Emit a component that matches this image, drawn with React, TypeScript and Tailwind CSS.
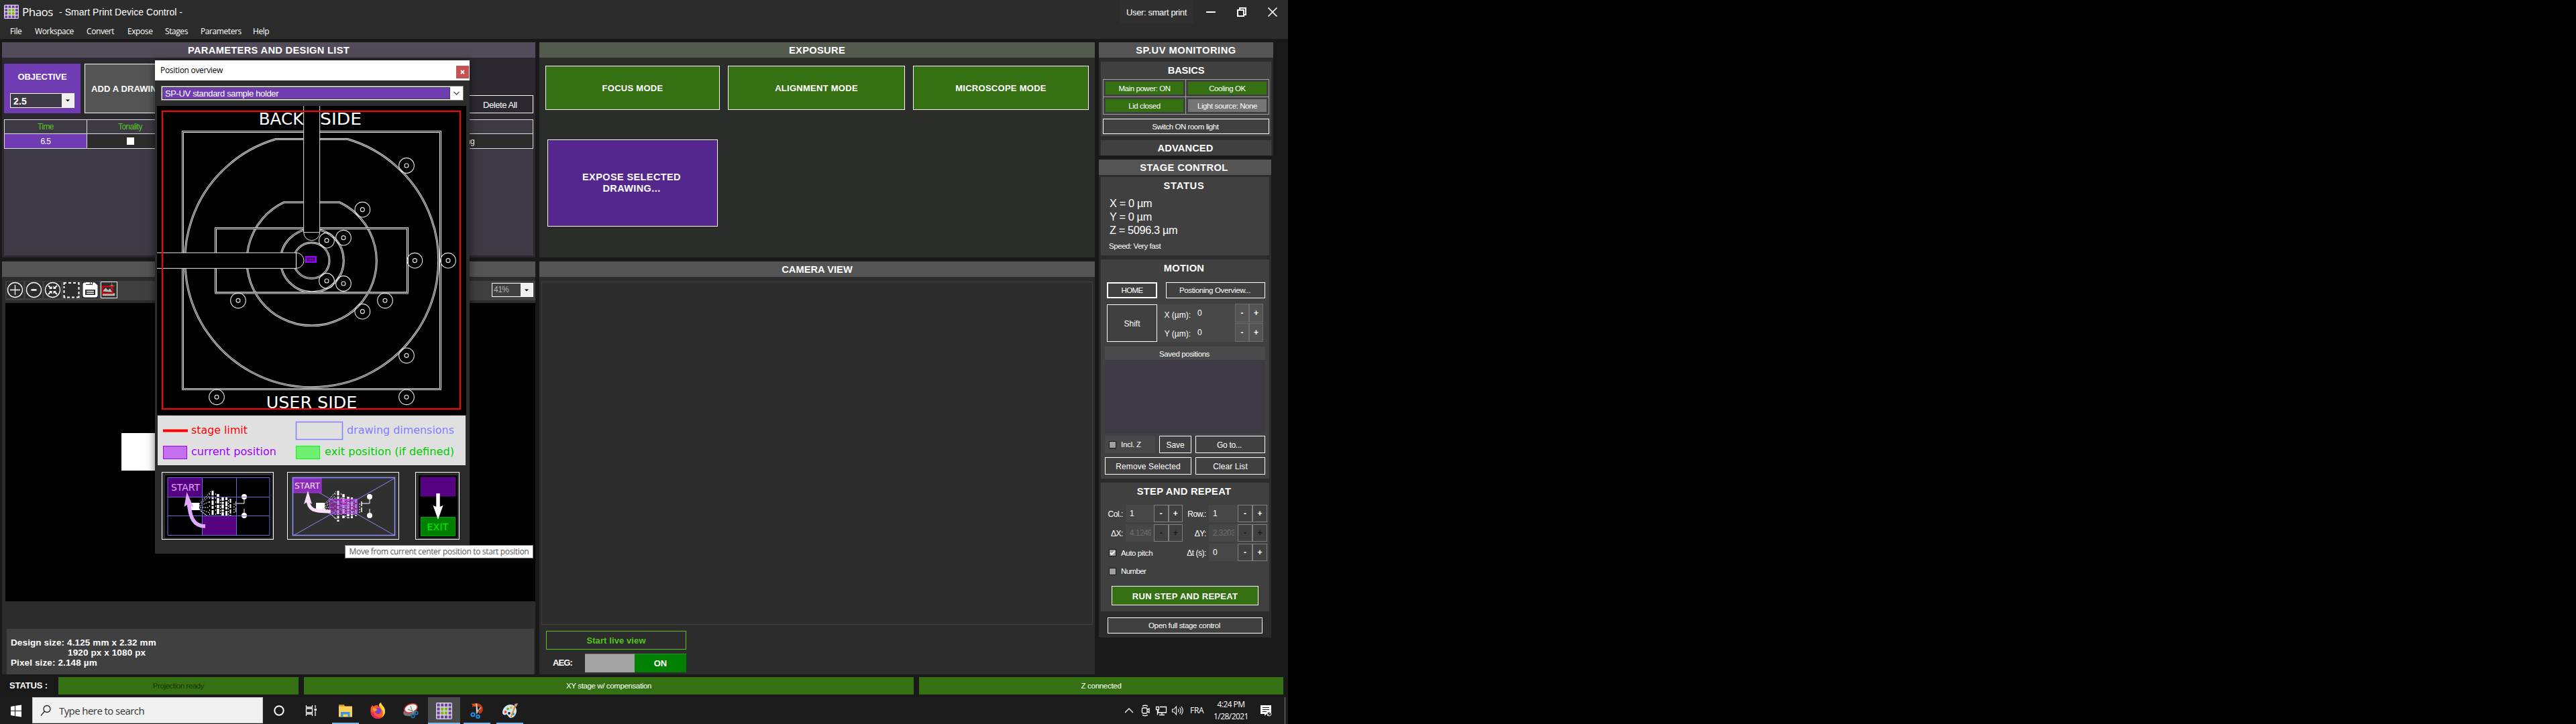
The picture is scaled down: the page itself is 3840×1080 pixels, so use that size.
import React from "react";

const heading = "font-bold text-[14.7px] leading-[16px] whitespace-nowrap text-white";
const small = "text-[11.5px] leading-[14px] whitespace-nowrap text-white";
const label = "text-[12px] leading-[14px] whitespace-nowrap text-white";
const center = "flex items-center justify-center shrink-0";

function PhaosLogo({ w, h }: { w: number; h: number }) {
  const cells = [];
  for (let r = 0; r < 4; r++)
    for (let c = 0; c < 4; c++) {
      const mid = r > 0 && r < 3 && c > 0 && c < 3;
      cells.push(<rect key={r * 4 + c} x={1.3 + c * 5} y={1.3 + r * 5} width="3.6" height="3.6" fill={mid ? "#7cb518" : "#6b3fa0"} />);
    }
  return (
    <svg width={w} height={h} viewBox="0 0 21 21" preserveAspectRatio="none">
      <rect width="21" height="21" rx="1.5" fill="#d9d4de" />
      {cells}
    </svg>
  );
}

function TitleBar() {
  return (
    <header className="flex h-[35px] shrink-0 items-start bg-[#2c2c2c]">
      <div className="flex h-[35px] flex-1 items-center pl-[6px]">
        <PhaosLogo w={22} h={21} />
        <span className="ml-[5px] w-[55px] font-['Open_Sans'] text-[17px] tracking-[-0.5px] text-white">Phaos</span>
        <span className="text-[14px] tracking-[0.04px] text-white pt-px">- Smart Print Device Control -</span>
      </div>
      <div className="flex h-[35px] w-[109px] items-center bg-[#303030] pl-[9px] pt-[3px] text-[13px] tracking-[-0.36px] text-white">User: smart print</div>
      <svg className="w-[141px] h-[35px]" viewBox="1779 0 141 35" fill="none" stroke="#fff" strokeWidth="2">
        <path d="M1798 18h14" />
        <path d="M1845 15h9v9h-9zM1848 14v-2h9v10h-3" />
        <path d="M1890.5 11.500l13 13M1903.500 11.500l-13 13" strokeWidth="1.7" />
      </svg>
    </header>
  );
}

function MenuBar() {
  const items: [string, string][] = [
    ["File", "w-[37px]"], ["Workspace", "w-[77px]"], ["Convert", "w-[61px]"], ["Expose", "w-[56px]"],
    ["Stages", "w-[53px]"], ["Parameters", "w-[78px]"], ["Help", "w-[40px]"],
  ];
  return (
    <nav className="flex h-[23px] shrink-0 items-center bg-[#2c2c2c] pl-[15px] font-['Open_Sans'] text-[12px] tracking-[-0.42px] text-white">
      {items.map(([t, w]) => <span key={t} className={w}>{t}</span>)}
    </nav>
  );
}

function Caret() {
  return (
    <span className="flex h-full w-[18px] items-center justify-center bg-[#f0f0f0]">
      <svg width="6" height="4" viewBox="0 0 6 4"><path d="M0 .5h6L3 3.500z" fill="#000" /></svg>
    </span>
  );
}

function ParametersPanel() {
  return (
    <section className="h-[321px] shrink-0 bg-[#2b282f]">
      <h2 className={`${center} ${heading} h-[23px] bg-[#524c5a] tracking-[0.3px]`}>PARAMETERS AND DESIGN LIST</h2>
      <div className="flex h-[83px] items-end px-[3px]">
        <div className="flex h-[74px] w-[114px] flex-col bg-[#703cb3] px-[9px] pt-[12px]">
          <span className="text-center text-[13px] font-bold leading-[16px] tracking-[-0.08px] text-white">OBJECTIVE</span>
          <div className="mt-[16px] flex h-[22px] border border-white bg-[#3e3a45]">
            <span className="flex-1 pl-[4px] pt-px text-[14px] font-bold leading-[20px] tracking-[0.2px] text-white">2.5</span>
            <Caret />
          </div>
        </div>
        <div className="ml-[6px] flex h-[74px] w-[140px] items-center border border-white bg-[#545454] pl-[9px] pt-px text-[13px] font-bold tracking-[0.1px] text-white">ADD A DRAWING</div>
        <div className="flex-1" />
        <div className="flex h-[27px] w-[104px] items-center border border-white pl-[28px] pt-[2px] text-[13px] tracking-[-0.41px] text-white">Delete All</div>
      </div>
      <div className="mx-[3px] mt-[9px] h-[203px] bg-[#3e3a45] text-[12px] tracking-[-0.6px]">
        <div className="flex h-[22px] border border-[#dcdcdc] text-[#56c41c]">
          <div className="flex w-[123px] items-center justify-center border-r border-[#dcdcdc]">Time</div>
          <div className="flex w-[128px] items-center justify-center">Tonality</div>
        </div>
        <div className="flex h-[22px] border border-t-0 border-[#dcdcdc] bg-[#2c2c2c] text-white">
          <div className="flex w-[123px] items-center justify-center border-r border-[#dcdcdc] bg-[#703cb3]">6.5</div>
          <div className="flex w-[128px] items-center justify-center"><span className="size-[11px] bg-white" /></div>
          <div className="flex w-[449px] items-center justify-end">Drawing</div>
        </div>
      </div>
    </section>
  );
}

function Tool({ children, active }: { children: React.ReactNode; active?: boolean }) {
  return (
    <span className={active ? "size-[25px] border border-white bg-[#2c2c2c]" : "size-[25px] bg-[#2c2c2c]"}>
      <svg viewBox="0 0 25 25" className="size-full" fill="none" stroke="#fff" strokeWidth="1.3">{children}</svg>
    </span>
  );
}

function PreviewPanel() {
  return (
    <section className="flex h-[616px] shrink-0 flex-col bg-[#2c2c2c]">
      <div className="h-[23px] bg-[#545454]" />
      <div className="ml-[5px] mt-[6px] flex h-[29px] items-start gap-[3px] bg-[#404040] pl-[2px] pt-px">
        <Tool><circle cx="12.500" cy="12.500" r="11" /><path d="M12.500 5v15M5 12.500h15" /></Tool>
        <Tool><circle cx="12.500" cy="12.500" r="11" /><path d="M8.500 12.500h8" strokeWidth="2.500" /></Tool>
        <Tool>
          <circle cx="12.500" cy="12.500" r="11" />
          <path d="M6 6l4.500 4.500M19 6l-4.500 4.500M6 19l4.500-4.500M19 19l-4.500-4.500" strokeWidth="2" />
          <path d="M7 11h4.500V6.500zM18 11h-4.500V6.500zM7 14h4.500v4.500zM18 14h-4.500v4.500z" fill="#fff" stroke="none" />
        </Tool>
        <Tool><path d="M1.500 5V2H5M8 2h4M15 2h4M22 2h1.500v3M23.500 8v4M23.500 15v4M23.500 21v2.500H20M17 23.500h-4M10 23.500H6M3.500 23.500h-2V20M1.500 17v-4M1.500 10V7" strokeWidth="2" /></Tool>
        <Tool>
          <path d="M1.500 4.500q0-3 3-3H19l4.500 4v15q0 3-3 3h-16q-3 0-3-3z" fill="#fff" stroke="none" />
          <path d="M6 1h10v4H6zM5 12h15v8H5z" fill="#2c2c2c" stroke="none" />
          <path d="M6 1h6v3H6zM13 1h2v3h-2z" fill="#fff" stroke="none" />
          <path d="M7 14.500h11M7 17.500h11" />
        </Tool>
        <Tool active>
          <path d="M2 18h20v4H2zM2 15l5-6 4 4 3-3 4 6z" fill="#bbb" stroke="none" />
          <circle cx="17" cy="6" r="2.200" fill="#999" stroke="none" />
          <path d="M17 1v10M12 6h10" stroke="#777" strokeWidth="1" />
          <rect x="2.200" y="7" width="16" height="11" stroke="#e00" strokeWidth="2" />
        </Tool>
        <span className="flex-1" />
        <div className="mr-[3px] mt-[2px] flex h-[21px] w-[62px] border border-white bg-[#404040]">
          <span className="flex-1 pl-[2px] text-[12px] leading-[18px] tracking-[-0.5px] text-[#b4b4b4]">41%</span>
          <Caret />
        </div>
      </div>
      <div className="ml-[5px] mt-[4px] flex h-[445px] shrink-0 items-start bg-black pl-[173px] pt-[194px]">
        <div className="h-[56px] w-[88px] bg-white" />
      </div>
      <div className="ml-[7px] mr-[2px] mt-auto h-[68px] bg-[#404040] pl-[6px] pt-[13px] text-[13.5px] font-bold leading-[15px] tracking-[0.12px] text-white">
        <p>Design size: 4.125 mm x 2.32 mm</p>
        <p className="pl-[85px]">1920 px x 1080 px</p>
        <p>Pixel size: 2.148 µm</p>
      </div>
    </section>
  );
}

function ExposurePanel() {
  const mode = `${center} h-[66px] border border-white bg-[#357013] pt-[2px] text-[13px] font-bold tracking-[0.27px] text-white`;
  return (
    <section className="h-[321px] shrink-0 bg-[#2a2d29]">
      <h2 className={`${center} ${heading} h-[23px] bg-[#525a4e] tracking-[0.3px]`}>EXPOSURE</h2>
      <div className="flex gap-[12px] pl-[9px] pt-[12px]">
        <div className={`${mode} w-[260px]`}>FOCUS MODE</div>
        <div className={`${mode} w-[264px]`}>ALIGNMENT MODE</div>
        <div className={`${mode} w-[262px]`}>MICROSCOPE MODE</div>
      </div>
      <div className={`${center} ml-[12px] mt-[44px] h-[130px] w-[254px] border border-white bg-[#54278f] pr-[3px] text-center text-[14.5px] font-bold leading-[17px] tracking-[0.4px] text-white`}>
        EXPOSE SELECTED<br />DRAWING...
      </div>
    </section>
  );
}

function CameraPanel() {
  return (
    <section className="flex h-[616px] shrink-0 flex-col bg-[#2c2c2c]">
      <h2 className={`${center} ${heading} h-[23px] bg-[#545454] tracking-[0px]`}>CAMERA VIEW</h2>
      <div className="mx-[3px] mt-[7px] h-[512px] shrink-0 border border-[#3e3e3e]" />
      <div className={`${center} ml-[10px] mt-[9px] h-[28px] w-[209px] border border-[#56c41c] pt-[2px] text-[13px] font-bold tracking-[0.1px] text-[#56c41c]`}>Start live view</div>
      <div className="ml-[20px] mt-[6px] flex h-[28px] items-center text-[13px] font-bold text-white">
        <span className="w-[48px] tracking-[-0.9px]">AEG:</span>
        <span className="h-[28px] w-[74px] border-t border-[#777] bg-[#a3a3a3]" />
        <span className={`${center} h-[28px] w-[77px] border-t border-[#2f8f2f] bg-[#008000]`}>ON</span>
      </div>
    </section>
  );
}

function Led({ text, off }: { text: string; off?: boolean }) {
  return (
    <div className="flex p-[3px]">
      <div className={`${center} ${small} flex-1 pt-px tracking-[-0.42px] ${off ? "bg-[#757575]" : "bg-[#357013]"}`}>{text}</div>
    </div>
  );
}

function Monitoring() {
  return (
    <section className="h-[169px] w-[260px] shrink-0 bg-[#2c2c2c]">
      <h2 className={`${center} ${heading} h-[23px] bg-[#545454] tracking-[0.5px]`}>SP.UV MONITORING</h2>
      <div className="mx-[3px] mt-[6px] h-[111px] bg-[#404040] px-[3px]">
        <h3 className={`${center} ${heading} h-[26px] tracking-[-0.15px]`}>BASICS</h3>
        <div className="grid h-[53px] grid-cols-[122px_123px] grid-rows-2 gap-px border border-[#a0a0a0] bg-[#a0a0a0] *:bg-[#404040]">
          <Led text="Main power: ON" />
          <Led text="Cooling OK" />
          <Led text="Lid closed" />
          <Led text="Light source: None" off />
        </div>
        <div className={`${center} ${small} mt-[6px] h-[23px] border border-white pr-[2px] tracking-[-0.45px]`}>Switch ON room light</div>
      </div>
      <h3 className={`${center} ${heading} mx-[3px] mt-[6px] h-[23px] bg-[#404040] pr-[2px] tracking-[0.1px]`}>ADVANCED</h3>
    </section>
  );
}

const Pm = ({ cls, dim }: { cls: string; dim?: boolean }) => (
  <div className={`${cls} flex shrink-0 border text-[12px] font-bold ${dim ? "text-[#161616]" : "text-white"}`}>
    <span className="flex flex-1 items-center justify-center border-r-2 border-inherit">-</span>
    <span className="flex flex-1 items-center justify-center">+</span>
  </div>
);

function Check({ on }: { on?: boolean }) {
  return (
    <span className="flex size-[11px] shrink-0 items-center justify-center border border-[#161616] bg-[#a0a0a0]">
      {on && <svg viewBox="0 0 9 9" className="size-[9px]" fill="none" stroke="#fff" strokeWidth="1.7"><path d="M1 4.500l2.300 2.500L8 2" /></svg>}
    </span>
  );
}

function Motion() {
  return (
    <div className="mx-[3px] mt-[6px] h-[327px] bg-[#404040]">
      <h3 className={`${center} ${heading} h-[25px] pr-[3px] tracking-[0.3px]`}>MOTION</h3>
      <div className="mt-[9px] flex pl-[9px]">
        <div className={`${center} ${small} h-[24px] w-[75px] border-2 border-white tracking-[-0.6px]`}>HOME</div>
        <div className={`${center} ${small} ml-[13px] h-[24px] w-[148px] border border-white pr-[2px] tracking-[-0.35px]`}>Postioning Overview...</div>
      </div>
      <div className="ml-[9px] mt-[8px] flex h-[57px] items-end">
        <div className={`${center} ${label} h-[56px] w-[75px] border border-white pt-[2px]`}>Shift</div>
        <div className="flex h-[56px] w-[54px] flex-col items-end bg-[#484848] pr-[4px] pt-[9px] text-[12px] leading-[14px] text-white">
          <span>X (µm):</span>
          <span className="mt-[14px]">Y (µm):</span>
        </div>
        <div className="flex h-[57px] w-[62px] flex-col bg-[#484848] pl-[6px] text-[12px] leading-[28px] text-white">
          <span className="h-[29px]">0</span><span>0</span>
        </div>
        <div className="flex h-[57px] flex-col justify-between bg-[#484848]">
          <Pm cls="h-[28px] w-[42px] border-[#6c6c6c] bg-[#545454]" />
          <Pm cls="h-[28px] w-[42px] border-[#6c6c6c] bg-[#545454]" />
        </div>
      </div>
      <div className={`${center} ${small} mx-[6px] mt-[7px] h-[20px] bg-[#4a4a4a] pr-[2px] pt-[2px] tracking-[-0.42px]`}>Saved positions</div>
      <div className="mx-[6px] h-[110px] bg-[#3e3a45]" />
      <div className="ml-[6px] mt-[3px] flex">
        <div className={`${small} flex h-[26px] w-[75px] items-center gap-[7px] bg-[#484848] pl-[6px] tracking-[-0.2px]`}><Check />Incl. Z</div>
        <div className={`${center} ${label} ml-[6px] h-[26px] w-[48px] border border-white pt-[2px] tracking-[-0.1px]`}>Save</div>
        <div className={`${center} ${label} ml-[6px] h-[26px] w-[104px] border border-white pr-[3px] pt-[2px] tracking-[-0.3px]`}>Go to...</div>
      </div>
      <div className="ml-[6px] mt-[6px] flex">
        <div className={`${center} ${label} h-[26px] w-[129px] border border-white pt-[2px] tracking-[0.12px]`}>Remove Selected</div>
        <div className={`${center} ${label} ml-[6px] h-[26px] w-[104px] border border-white pt-[2px] tracking-[0.1px]`}>Clear List</div>
      </div>
    </div>
  );
}

function Stepper({ name, value, cls, dim, wide }: { name: string; value: string; cls: string; dim?: boolean; wide?: boolean }) {
  return (
    <div className="flex h-[26px] items-center">
      <span className={`${label} ${cls} pt-[2px] text-right tracking-[-0.45px]`}>{name}</span>
      <span className={`ml-[4px] flex h-[26px] shrink-0 items-center bg-[#474747] pl-[6px] text-[12px] ${wide ? "w-[43px]" : "w-[42px]"} ${dim ? "text-[#6f6f6f]" : "text-white"}`}>
        <span className="w-[32px] overflow-hidden tracking-[-0.6px]">{value}</span>
      </span>
      <Pm cls={wide ? "h-[26px] w-[44px] border-[#808080]" : "h-[26px] w-[43px] border-[#808080]"} dim={dim} />
    </div>
  );
}

function StepRepeat() {
  return (
    <div className="mx-[3px] mt-[6px] flex h-[192px] flex-col bg-[#404040]">
      <h3 className={`${center} ${heading} h-[25px] pr-[3px] tracking-[0.3px]`}>STEP AND REPEAT</h3>
      <div className="mt-[8px] flex">
        <div className="flex w-[122px] flex-col gap-[3px]">
          <Stepper name="Col.:" value="1" cls="w-[33px]" />
          <Stepper name="ΔX:" value="4.1249" cls="w-[33px]" dim />
          <div className={`${small} flex h-[26px] items-center gap-[7px] pl-[12px] tracking-[-0.4px]`}><Check on /><span className="pt-[2px]">Auto pitch</span></div>
        </div>
        <div className="flex flex-col gap-[3px]">
          <Stepper name="Row.:" value="1" cls="w-[35px]" wide />
          <Stepper name="ΔY:" value="2.3203" cls="w-[35px]" dim wide />
          <Stepper name="Δt (s):" value="0" cls="w-[35px]" wide />
        </div>
      </div>
      <div className={`${small} mt-[8px] flex items-center gap-[7px] pl-[12px] tracking-[-0.6px]`}><Check />Number</div>
      <div className={`${center} ml-[16px] mt-[15px] h-[29px] w-[219px] border border-white bg-[#357013] pt-[2px] text-[13px] font-bold tracking-[0.27px] text-white`}>RUN STEP AND REPEAT</div>
    </div>
  );
}

function StageControl() {
  return (
    <section className="mt-[6px] h-[713px] w-[257px] shrink-0 bg-[#2c2c2c]">
      <h2 className={`${center} ${heading} h-[23px] bg-[#545454] pr-[3px] tracking-[0.4px]`}>STAGE CONTROL</h2>
      <div className="mx-[3px] mt-[3px] h-[117px] w-[251px] bg-[#404040] pl-[13px]">
        <h3 className={`${center} ${heading} h-[25px] pr-[16px] tracking-[0.7px]`}>STATUS</h3>
        <div className="mt-[4px] text-[16.3px] leading-[20px] tracking-[-0.35px] text-white">
          <p>X = 0 µm</p><p>Y = 0 µm</p><p>Z = 5096.3 µm</p>
        </div>
        <p className={`${small} -ml-px mt-[7px] tracking-[-0.44px]`}>Speed: Very fast</p>
      </div>
      <Motion />
      <StepRepeat />
      <div className={`${center} ${small} ml-[13px] mt-[9px] h-[24px] w-[231px] border border-white bg-[#404040] pr-[2px] tracking-[-0.35px]`}>Open full stage control</div>
    </section>
  );
}

function StatusBar() {
  return (
    <div className="flex h-[34px] shrink-0 items-center">
      <span className="w-[87px] pl-[14px] text-[13px] font-bold tracking-[-0.13px] text-white">STATUS :</span>
      <div className={`${center} ${small} h-[26px] w-[358px] bg-[#357013] tracking-[-0.42px]`}><span className="text-[#1b3309]">Projection ready</span></div>
      <div className={`${center} ${small} ml-[8px] h-[26px] w-[909px] bg-[#357013] tracking-[-0.38px]`}>XY stage w/ compensation</div>
      <div className={`${center} ${small} ml-[8px] h-[26px] w-[543px] bg-[#357013] tracking-[-0.3px]`}>Z connected</div>
    </div>
  );
}

const pins = [
  [1128, 291], [931, 488], [846, 614], [771, 626], [771, 807], [846, 819], [931, 944],
  [1165, 716], [1314, 716], [375, 895], [1032, 895], [279, 1327], [1128, 1327], [1128, 1141],
];

function HolderMap() {
  const shapes = (
    <>
      <path d="M543 172.500H865A567 567 0 1 1 543 172.500z" />
      <path d="M581 455H827A290 290 0 1 1 581 455z" />
      <circle cx="706" cy="716" r="141" />
      <circle cx="703" cy="716" r="80" />
    </>
  );
  const boxes = (
    <>
      <rect x="127.500" y="139.500" width="1152" height="1152" />
      <rect x="274.500" y="572" width="858" height="288" />
    </>
  );
  return (
    <svg className="mx-[3px] mt-[8px] block h-[461px] w-[461px] bg-black" viewBox="12 24 1383 1383" fill="none">
      <g stroke="#e6e6e6" strokeWidth="9">{shapes}</g>
      <g stroke="#4a4a4a" strokeWidth="3.500">{shapes}</g>
      <g stroke="#f0f0f0" strokeWidth="9">{boxes}</g>
      <g stroke="#101010" strokeWidth="3">{boxes}</g>
      <path d="M124 1292.500h1159M271 861h865" stroke="#8a8a8a" strokeWidth="9" />
      <path d="M668 0h72v590a36 36 0 0 1-72 0z" fill="#000" stroke="#ddd" strokeWidth="3" />
      <path d="M668 590h72" stroke="#ddd" strokeWidth="3" />
      <path d="M0 681h634a35 35 0 0 1 0 70H0z" fill="#000" stroke="#ececec" strokeWidth="3" />
      <path d="M634.500 681v70" stroke="#fff" strokeWidth="3" />
      {pins.map(([x, y], i) => (
        <g key={i} stroke="#e8e8e8" strokeWidth="3.300">
          <circle cx={x} cy={y} r="34" /><circle cx={x} cy={y} r="9" />
        </g>
      ))}
      <rect x="678" y="699" width="45" height="24" fill="#4b0080" stroke="#9d00ff" strokeWidth="6" />
      <path d="M686 711h28M698 706v10M706 705v12" stroke="#7a30b0" strokeWidth="3" strokeDasharray="4 2" />
      <g fill="#fff" fontFamily="DejaVu Sans" fontSize="72">
        <text x="467" y="107" textLength="200" lengthAdjust="spacingAndGlyphs">BACK</text>
        <text x="741" y="107" textLength="186" lengthAdjust="spacingAndGlyphs">SIDE</text>
        <text x="500" y="1377" textLength="407" lengthAdjust="spacingAndGlyphs">USER SIDE</text>
      </g>
      <rect x="36" y="48" width="1332" height="1332" stroke="#f00" strokeWidth="6" />
    </svg>
  );
}

function Legend() {
  return (
    <svg className="mx-[4px] block h-[75px] w-[459px] bg-[#e0e0e0]" viewBox="235 619 459 75" fontFamily="DejaVu Sans" fontSize="15.500">
      <path d="M235 619.500h459" stroke="#3a3a3a" />
      <path d="M243 642.500h37" stroke="#f00" strokeWidth="4" />
      <rect x="243.500" y="665.500" width="35" height="19" fill="#c470f0" stroke="#9d00ff" />
      <rect x="441.500" y="629.500" width="69" height="26" fill="#e0e0e0" stroke="#8080ff" strokeWidth="1.500" />
      <rect x="441.500" y="665.500" width="35" height="19" fill="#70f070" stroke="#0f0" />
      <text x="285" y="647" fill="#f80505" textLength="84" lengthAdjust="spacingAndGlyphs">stage limit</text>
      <text x="285" y="679" fill="#9d00ff" textLength="127" lengthAdjust="spacingAndGlyphs">current position</text>
      <text x="517" y="647" fill="#8080ff" textLength="160" lengthAdjust="spacingAndGlyphs">drawing dimensions</text>
      <text x="484" y="679" fill="#0c0" textLength="193" lengthAdjust="spacingAndGlyphs">exit position (if defined)</text>
    </svg>
  );
}

function Chip() {
  return (
    <g stroke="#fff" fill="none" strokeWidth="1">
      <rect x="284" y="750" width="13" height="11" fill="#fff" stroke="none" />
      <path d="M297 752L314 733M297 755l16-7M297 759l16 6M297 760l19 15M298 757h14M300 751l12-11M299 762l14 11" strokeDasharray="2 1.500" />
      <path d="M317 732v46" strokeWidth="3" strokeDasharray="7 1.500 4 2" />
      <path d="M312.500 736v38M321.500 736v36" strokeDasharray="2 4" />
      <path d="M325 737v36" strokeWidth="3.500" strokeDasharray="5 1 8 2" />
      <path d="M332 741v32" strokeWidth="3.500" strokeDasharray="6 1.500 3 1" />
      <path d="M337.500 742v31" strokeWidth="3" strokeDasharray="4 2 7 1" />
      <path d="M343.500 744v26" strokeWidth="2" strokeDasharray="6 2" />
      <path d="M328.500 745v26M340.500 746v22M349 751v14" strokeDasharray="2 2" />
      <path d="M352 748v16" strokeWidth="1.500" strokeDasharray="7 2" />
      <path d="M364 743v8h-11M364 759v8" />
      <circle cx="364" cy="741" r="4" fill="#fff" stroke="none" />
      <circle cx="364" cy="769" r="4" fill="#fff" stroke="none" />
    </g>
  );
}

function MoveButtons() {
  return (
    <div className="flex pl-[10px] pt-[10px]">
      <svg className="h-[101px] w-[167px] border border-white" viewBox="242 705 165 99">
        <rect x="246" y="709" width="159" height="93" fill="#000" />
        <rect x="250" y="713" width="51" height="28" fill="#550080" />
        <Chip />
        <rect x="302" y="769" width="50" height="29" fill="#550080" />
        <path d="M250 712.500h152v86H250zM301.500 712v87M352.500 712v87M250 741.500h152M250 769.500h152" fill="none" stroke="#6a6ae0" />
        <path d="M306 785c-17 0-23-12-25-38" fill="none" stroke="#e0a8ff" strokeWidth="5.500" />
        <path d="M278.500 734l10 23-8-5-6 4z" fill="#e0a8ff" />
        <text x="255" y="731.500" fontFamily="DejaVu Sans" fontSize="14" fill="#e0a8ff" textLength="43" lengthAdjust="spacingAndGlyphs">START</text>
      </svg>
      <svg className="ml-[20px] h-[101px] w-[167px] border border-white" viewBox="242 705 165 99">
        <rect x="246" y="709" width="159" height="93" fill="#303030" />
        <Chip />
        <rect x="304.500" y="744.500" width="41" height="22" fill="#b030d0" fillOpacity=".55" stroke="#b040ff" />
        <path d="M250 713l152 86M402 713l-152 86" stroke="#8888ee" />
        <rect x="250" y="713" width="42" height="22" fill="#8a2cb8" stroke="#a040e0" />
        <path d="M249.500 712.500h152v86h-152z" fill="none" stroke="#9090ff" strokeWidth="1.500" />
        <path d="M319 745l14 11M333 745l-14 11" stroke="#e020ff" />
        <path d="M306 763c-26 0-34-2-34-20" fill="none" stroke="#ffe0ff" strokeWidth="5" />
        <path d="M272 732l6 20-6-4-6 4z" fill="#ffe0ff" />
        <text x="252" y="728.500" fontFamily="DejaVu Sans" fontSize="12.500" fill="#ffe0ff" textLength="38" lengthAdjust="spacingAndGlyphs">START</text>
      </svg>
      <svg className="ml-[24px] h-[101px] w-[66px] border border-white" viewBox="620 705 64 99">
        <rect x="624" y="709" width="58" height="93" fill="#000" />
        <rect x="627.500" y="712" width="51" height="28" fill="#550080" stroke="#6a00a0" />
        <rect x="627.500" y="771.500" width="51" height="28" fill="#008000" stroke="#00a000" />
        <path d="M653 736v24" stroke="#fff" strokeWidth="5.500" />
        <path d="M645.500 754l7.500 3 7.500-3-7.500 21z" fill="#fff" />
        <text x="636.500" y="790.500" fontFamily="DejaVu Sans" fontSize="13.500" fill="#0e0" textLength="32" lengthAdjust="spacingAndGlyphs">EXIT</text>
      </svg>
    </div>
  );
}

function PositionDialog() {
  return (
    <div className="absolute left-[231px] top-[90px] h-[736px] w-[469px] bg-[#2c2c2c] shadow-[0_2px_12px_rgba(0,0,0,0.55)]">
      <div className="flex h-[30px] items-center justify-between bg-white pl-[8px] pr-px">
        <span className="font-['Open_Sans'] text-[12px] tracking-[-0.3px] text-black">Position overview</span>
        <span className="mt-[4px] flex size-[19px] items-center justify-center bg-[#c75050]">
          <svg width="7" height="7" viewBox="0 0 7 7"><path d="M1 1l5 5M6 1L1 6" stroke="#fff" strokeWidth="1.800" /></svg>
        </span>
      </div>
      <div className="ml-[9px] mt-[8px] flex h-[22px] w-[451px] border border-[#808080] bg-white p-px">
        <div className="w-[429px] border border-[#404040] bg-[#703cb3] pl-[3px] text-[13px] leading-[18px] tracking-[-0.36px] text-white">SP-UV standard sample holder</div>
        <div className="flex flex-1 items-center justify-center">
          <svg width="9" height="6" viewBox="0 0 9 6"><path d="M.5 1l4 4 4-4" fill="none" stroke="#444" strokeWidth="1.200" /></svg>
        </div>
      </div>
      <HolderMap />
      <Legend />
      <MoveButtons />
    </div>
  );
}

function TaskIcon({ children, running }: { children: React.ReactNode; running?: boolean }) {
  return (
    <div className="flex h-[40px] w-[40px] flex-col items-center">
      <svg viewBox="0 0 24 24" className="mt-[8px] size-[24px] shrink-0" fill="none">{children}</svg>
      {running && <span className="mt-[6px] h-[2px] w-full bg-[#76b9ed]" />}
    </div>
  );
}

function Taskbar() {
  return (
    <footer className="flex h-[40px] shrink-0 items-start bg-[#1c1c1c] text-white">
      <svg className="h-[40px] w-[48px]" viewBox="0 0 48 40"><path d="M16 14l6-1v7h-6zM23 12.800l9-1.300V20h-9zM16 21h6v7l-6-1zM23 21h9v8.500l-9-1.300z" fill="#fff" /></svg>
      <div className="flex h-[39px] w-[344px] items-center border border-[#c8c8c8] bg-[#f1f1f1] pl-[10px]">
        <svg width="18" height="18" viewBox="0 0 18 18" fill="none" stroke="#222" strokeWidth="1.300"><circle cx="11" cy="6.500" r="5" /><path d="M7.500 10L2 16.500" /></svg>
        <span className="ml-[11px] mt-[2px] font-['Open_Sans'] text-[15px] tracking-[-0.58px] text-[#333]">Type here to search</span>
      </div>
      <svg className="h-[40px] w-[103px]" viewBox="392 0 103 40" fill="none" stroke="#fff">
        <circle cx="416" cy="20" r="6.700" strokeWidth="2" />
        <path d="M456.500 12v3h9v-3M456.500 28v-3h9v3M456.500 17h9v6h-9zM470 12v4M470 20.500V28" strokeWidth="1.300" />
        <path d="M468.500 17h3.500v3h-3.500z" fill="#fff" stroke="none" />
      </svg>
      <TaskIcon running>
        <path d="M2 3.500h8l1 2h11v16H2z" fill="#fdd05c" />
        <path d="M2 3.500h8v2.500H2z" fill="#e5a00d" />
        <path d="M5 14h13.500v7.500h-3V17.500h-7v4H5z" fill="#3a96dd" />
      </TaskIcon>
      <div className="ml-[8px]">
        <TaskIcon>
          <path d="M2 7l2-3 2 2c2-2 4-2 6-2 0 2 1 2 2 2-1-3 0-4 3-6 0 4 6 6 6 13A10.500 10.500 0 0 1 1.500 14c0-3 0-5 .5-7z" fill="#ff5a2a" />
          <path d="M14 4c0-2 1-3 3-4 0 4 6 6 6 13 0 4-2 7-5 9 3-5 2-10-1-13-1-2-2-3-3-5z" fill="#ffd93b" />
          <path d="M2 14a10 10 0 0 0 17 7c-7 2-13-1-13-6z" fill="#e8246b" />
          <circle cx="12.500" cy="12.500" r="4.700" fill="#7b3fd6" />
          <path d="M5 8c3 0 5 1 7 3-2 0-2 2-4 2S4 12 5 8z" fill="#ff9a1f" />
        </TaskIcon>
      </div>
      <div className="ml-[9px]">
        <TaskIcon>
          <ellipse cx="11" cy="14" rx="10" ry="6" fill="#777" transform="rotate(-14 11 14)" />
          <ellipse cx="12.500" cy="8.500" rx="10" ry="6.300" fill="#f5f5f5" stroke="#d42a2a" strokeWidth="1.500" transform="rotate(-18 12.500 8.500)" />
          <path d="M12 5l4 12M8 10l10 4" stroke="#9a9a9a" strokeWidth="1.500" />
          <g stroke="#1c6fa8" strokeWidth="1.800"><circle cx="20.500" cy="15.500" r="2.300" /><circle cx="15.500" cy="20" r="2.500" /></g>
        </TaskIcon>
      </div>
      <div className="ml-[6px] flex h-[40px] w-[48px] flex-col items-center bg-[#4a4a4a] pt-[8px]">
        <PhaosLogo w={24} h={25} />
        <span className="mt-[5px] h-[2px] w-[48px] shrink-0 bg-[#76b9ed]" />
      </div>
      <div className="ml-[5px]">
        <TaskIcon running>
          <path d="M5 4c4-4 12-4 15 2 2 5 0 9-4 11l-2-3c3-2 4-5 2-7S8 5 5 7z" fill="#c8380c" />
          <path d="M4 2l8-1 1 4-5 1z" fill="#e2501a" />
          <path d="M12 1l1.500 14-2.500 2-.5-15z" fill="#ddd" />
          <path d="M18 7l-7 9" stroke="#aaa" strokeWidth="2" />
          <g stroke="#1a8fe3" strokeWidth="2"><circle cx="6" cy="18" r="2.500" /><circle cx="13.500" cy="21" r="2.300" /></g>
        </TaskIcon>
      </div>
      <div className="ml-[9px]">
        <TaskIcon running>
          <path d="M13 3C6 3 1 9 1 15c0 3 3 4 5 3 3-1 3 4 7 5 5 0 9-5 9-11 0-5-4-9-9-9z" fill="#cfe6f5" />
          <circle cx="5.500" cy="14" r="1.900" fill="#e5482d" /><circle cx="9" cy="9.500" r="1.900" fill="#5cb531" />
          <circle cx="14" cy="7.500" r="2" fill="#f6b11c" /><circle cx="11" cy="16" r="1.900" fill="#222" />
          <circle cx="17" cy="17" r="2" fill="#2a8fd8" />
          <path d="M13.500 22L20 5" stroke="#e08a2a" strokeWidth="2" />
          <path d="M19 6l0-4 5-1-2 5z" fill="#c9996b" />
        </TaskIcon>
      </div>
      <span className="flex-1" />
      <svg className="h-[40px] w-[100px]" viewBox="1674 0 100 40" fill="none" stroke="#fff" strokeWidth="1.300">
        <path d="M1677 23l6-6 6 6" />
        <rect x="1702.500" y="16" width="7.500" height="8" rx="1.500" /><path d="M1710 19l3-2v6l-3-2M1703 13.500q4-2.500 8 0M1703 26.500q4 2.500 8 0" />
        <path d="M1729 14.500h9.500v8.500h-12v-4M1732 23v3M1728 26.500h8M1723.500 14.500h4v4h-4zM1725.500 18.500v8" />
        <path d="M1747.500 18h2.500l3.500-4v12l-3.500-4h-2.500zM1756 17.500q2 2.500 0 5M1758.500 15.500q3.500 4.500 0 9M1761 14q4.500 6 0 12" strokeWidth="1.100" />
      </svg>
      <span className="w-[32px] pt-[11px] font-['Open_Sans'] text-[12px] leading-[18px] tracking-[-0.3px]">FRA</span>
      <div className="w-[58px] pt-[2px] text-center font-['Open_Sans'] text-[12px] leading-[18px] tracking-[-0.55px]"><p>4:24 PM</p><p>1/28/2021</p></div>
      <svg className="h-[40px] w-[56px]" viewBox="1864 0 56 40">
        <path d="M1879 12h16v13h-7l-3 3v-3h-6z" fill="#fff" />
        <path d="M1882 15.500h10M1882 18.500h10M1882 21.500h6" stroke="#1c1c1c" />
        <circle cx="1892" cy="25" r="3" fill="#1c1c1c" stroke="#fff" /><path d="M1889.500 27.500l4.500-5" stroke="#fff" />
        <path d="M1915.500 0v40" stroke="#777" />
      </svg>
    </footer>
  );
}

export default function App() {
  return (
    <div className="relative h-[1080px] w-[3840px] overflow-hidden bg-black font-['Liberation_Sans',sans-serif]">
      <div className="flex h-[1080px] w-[1920px] flex-col bg-[#191919]">
        <TitleBar />
        <MenuBar />
        <main className="flex h-[948px] shrink-0 gap-[6px] pl-[3px] pt-[5px]">
          <div className="flex w-[795px] flex-col gap-[6px]"><ParametersPanel /><PreviewPanel /></div>
          <div className="flex w-[828px] flex-col gap-[6px]"><ExposurePanel /><CameraPanel /></div>
          <div className="flex flex-col"><Monitoring /><StageControl /></div>
        </main>
        <StatusBar />
        <Taskbar />
      </div>
      <PositionDialog />
      <div className={`${center} absolute left-[514px] top-[813px] h-[20px] w-[281px] border border-[#767676] bg-white font-['Open_Sans'] text-[12px] tracking-[-0.33px] whitespace-nowrap text-[#575757]`}>
        Move from current center position to start position
      </div>
    </div>
  );
}
